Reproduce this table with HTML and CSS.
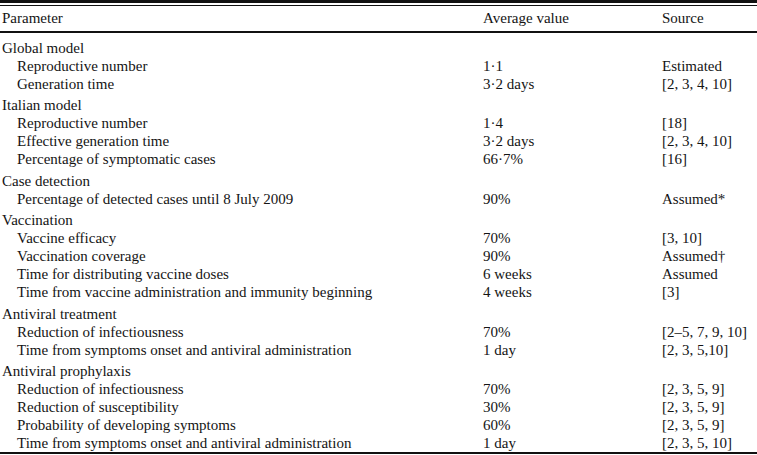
FILE: index.html
```html
<!DOCTYPE html>
<html>
<head>
<meta charset="utf-8">
<link rel="stylesheet" href="styles.css">
</head>
<body>
<div class="frame">
<table class="params">
<colgroup><col class="c1"><col class="c2"><col class="c3"></colgroup>
<thead>
<tr class="head"><th>Parameter</th><th>Average value</th><th>Source</th></tr>
</thead>
<tbody>
<tr class="group first"><td colspan="3">Global model</td></tr>
<tr><td class="sub">Reproductive number</td><td>1·1</td><td>Estimated</td></tr>
<tr><td class="sub">Generation time</td><td>3·2 days</td><td>[2, 3, 4, 10]</td></tr>
<tr class="group"><td colspan="3">Italian model</td></tr>
<tr><td class="sub">Reproductive number</td><td>1·4</td><td>[18]</td></tr>
<tr><td class="sub">Effective generation time</td><td>3·2 days</td><td>[2, 3, 4, 10]</td></tr>
<tr><td class="sub">Percentage of symptomatic cases</td><td>66·7%</td><td>[16]</td></tr>
<tr class="group"><td colspan="3">Case detection</td></tr>
<tr><td class="sub">Percentage of detected cases until 8 July 2009</td><td>90%</td><td>Assumed*</td></tr>
<tr class="group"><td colspan="3">Vaccination</td></tr>
<tr><td class="sub">Vaccine efficacy</td><td>70%</td><td>[3, 10]</td></tr>
<tr><td class="sub">Vaccination coverage</td><td>90%</td><td>Assumed†</td></tr>
<tr><td class="sub">Time for distributing vaccine doses</td><td>6 weeks</td><td>Assumed</td></tr>
<tr><td class="sub">Time from vaccine administration and immunity beginning</td><td>4 weeks</td><td>[3]</td></tr>
<tr class="group"><td colspan="3">Antiviral treatment</td></tr>
<tr><td class="sub">Reduction of infectiousness</td><td>70%</td><td>[2–5, 7, 9, 10]</td></tr>
<tr><td class="sub">Time from symptoms onset and antiviral administration</td><td>1 day</td><td>[2, 3, 5,10]</td></tr>
<tr class="group"><td colspan="3">Antiviral prophylaxis</td></tr>
<tr><td class="sub">Reduction of infectiousness</td><td>70%</td><td>[2, 3, 5, 9]</td></tr>
<tr><td class="sub">Reduction of susceptibility</td><td>30%</td><td>[2, 3, 5, 9]</td></tr>
<tr><td class="sub">Probability of developing symptoms</td><td>60%</td><td>[2, 3, 5, 9]</td></tr>
<tr><td class="sub">Time from symptoms onset and antiviral administration</td><td>1 day</td><td>[2, 3, 5, 10]</td></tr>
</tbody>
</table>
</div>
</body>
</html>
```
FILE: styles.css
```css
html, body {
  margin: 0;
  padding: 0;
  background: #fff;
}
body {
  font-family: "Liberation Serif", "Times New Roman", serif;
  font-size: 15px;
  color: #141414;
}
.frame {
  width: 757px;
  border-top: 3px solid #111;
  padding-top: 2px;
}
.params {
  width: 757px;
  table-layout: fixed;
  border-collapse: separate;
  border-spacing: 0;
  border-top: 1px solid #111;
  border-bottom: 2px solid #111;
  font-family: "Liberation Serif", "Times New Roman", serif;
  font-size: 15px;
}
.c1 { width: 483px; }
.c2 { width: 179px; }
.c3 { width: 95px; }
.params th {
  font-weight: normal;
  text-align: left;
  padding: 0;
  height: 25px;
  line-height: 25px;
  border-bottom: 2px solid #111;
}
.params td {
  padding: 0;
  height: 18px;
  line-height: 18px;
  white-space: nowrap;
  vertical-align: bottom;
}
.params th:first-child,
.params td:first-child {
  padding-left: 2px;
}
.params td.sub {
  padding-left: 17px;
}
.params tr.group td {
  height: 21.5px;
}
.params tr.group.first td {
  height: 23.5px;
}
```
